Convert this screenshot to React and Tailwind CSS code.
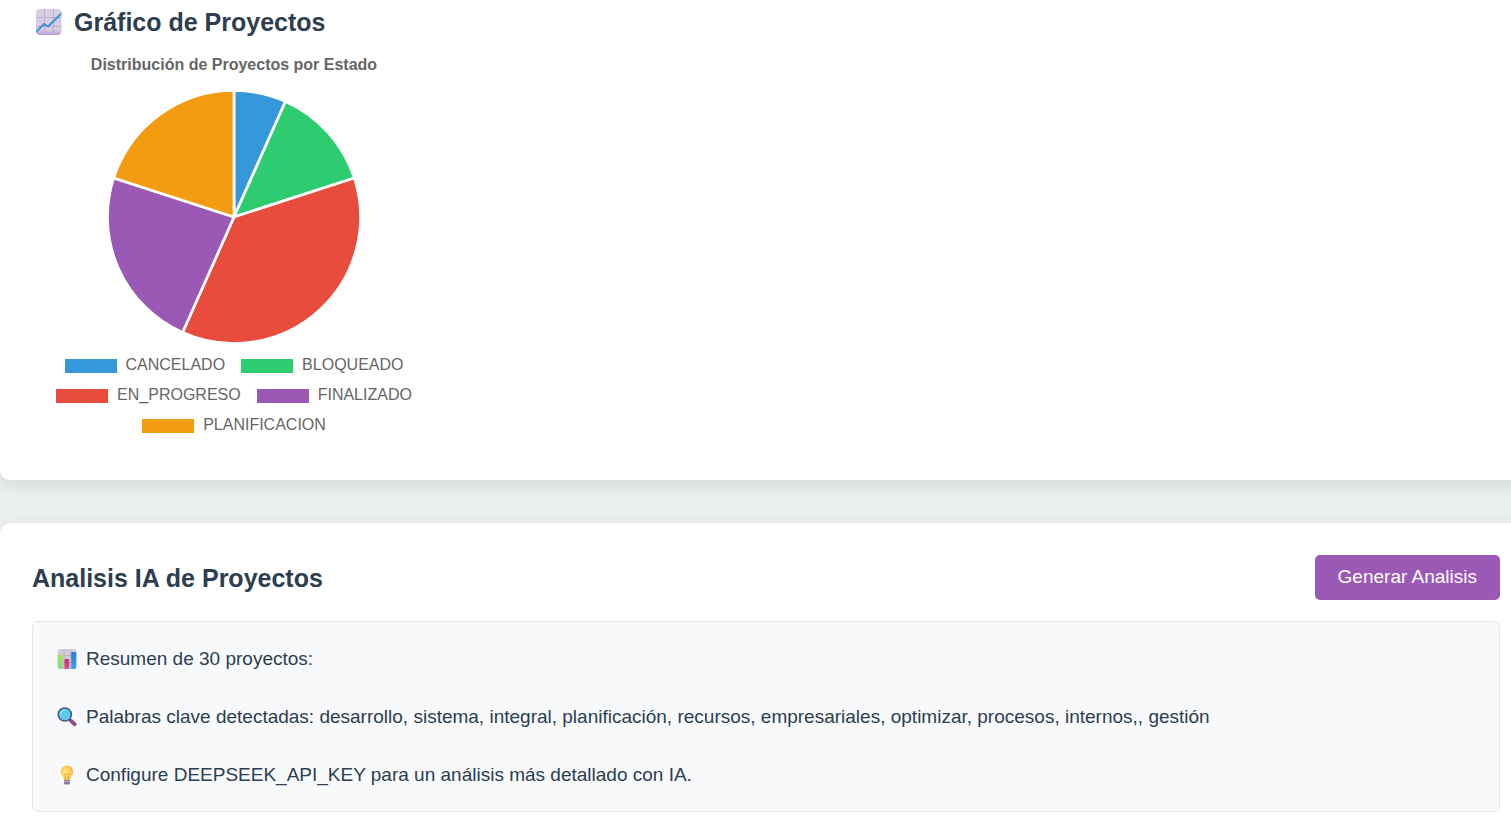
const SLICES = [
  { label: "CANCELADO", value: 2, fill: "fill-[#3498db]", swatch: "bg-[#3498db]" },
  { label: "BLOQUEADO", value: 4, fill: "fill-[#2ecc71]", swatch: "bg-[#2ecc71]" },
  { label: "EN_PROGRESO", value: 11, fill: "fill-[#e74c3c]", swatch: "bg-[#e74c3c]" },
  { label: "FINALIZADO", value: 7, fill: "fill-[#9b59b6]", swatch: "bg-[#9b59b6]" },
  { label: "PLANIFICACION", value: 6, fill: "fill-[#f39c12]", swatch: "bg-[#f39c12]" },
];

const RADIUS = 126.5;
const CENTER = 128;

function slicePaths(slices) {
  const total = slices.reduce((sum, s) => sum + s.value, 0);
  const point = (v) => {
    const a = (v / total) * Math.PI * 2;
    return `${CENTER + RADIUS * Math.sin(a)} ${CENTER - RADIUS * Math.cos(a)}`;
  };
  let start = 0;
  return slices.map((s) => {
    const end = start + s.value;
    const large = s.value / total > 0.5 ? 1 : 0;
    const d = `M${CENTER} ${CENTER}L${point(start)}A${RADIUS} ${RADIUS} 0 ${large} 1 ${point(end)}Z`;
    start = end;
    return { ...s, d };
  });
}

function PieChart() {
  return (
    <svg viewBox="0 0 256 256" className="size-64" role="img" aria-label="Distribución de Proyectos por Estado">
      {slicePaths(SLICES).map((s) => (
        <path key={s.label} d={s.d} className={s.fill} stroke="#fff" strokeWidth="2.7" strokeLinejoin="bevel" />
      ))}
    </svg>
  );
}

function TrendIcon() {
  return (
    <svg viewBox="0 0 26 26" className="size-[26px] shrink-0" aria-hidden="true">
      <defs>
        <linearGradient id="trend-bg" x1="0" y1="0" x2="0" y2="1">
          <stop offset="0" stopColor="#d6d0de" />
          <stop offset="0.8" stopColor="#d8cbe4" />
          <stop offset="1" stopColor="#b99bcf" />
        </linearGradient>
        <clipPath id="trend-clip"><rect width="25.500" height="26" rx="4" /></clipPath>
      </defs>
      <g clipPath="url(#trend-clip)">
        <rect width="26" height="26" fill="url(#trend-bg)" />
        <path d="M8.500 0V26M17.500 0V26M0 8.500H26M0 17.500H26" stroke="#b9adc4" strokeWidth="0.900" />
        <path d="M0 23L8 15L12 17.500L26 4" fill="none" stroke="#3191dc" strokeWidth="1.800" strokeLinejoin="round" />
      </g>
    </svg>
  );
}

function BarsIcon() {
  return (
    <svg viewBox="0 0 20 20" className="size-5 shrink-0" aria-hidden="true">
      <defs>
        <linearGradient id="bar-green" x1="0" y1="0" x2="0" y2="1">
          <stop offset="0" stopColor="#a5ea4f" /><stop offset="1" stopColor="#7bdc7f" />
        </linearGradient>
        <linearGradient id="bar-pink" x1="0" y1="0" x2="0" y2="1">
          <stop offset="0" stopColor="#c52c72" /><stop offset="1" stopColor="#f0448b" />
        </linearGradient>
        <linearGradient id="bar-blue" x1="0" y1="0" x2="0" y2="1">
          <stop offset="0" stopColor="#2a7bd0" /><stop offset="1" stopColor="#38a4f5" />
        </linearGradient>
      </defs>
      <rect x="0.5" width="19" height="20" rx="2.5" fill="#d2cbda" />
      <path d="M7 0V20M13.5 0V20M0.5 6.5H19.5M0.5 13.5H19.5" stroke="#b7abc2" strokeWidth="0.8" />
      <path d="M1 5.5H4.500Q5.500 5.500 5.500 6.500V20H3Q1 20 1 18Z" fill="url(#bar-green)" />
      <rect x="7.500" y="10" width="4.600" height="10" rx="1" fill="url(#bar-pink)" />
      <path d="M14.200 4Q14.200 3 15.200 3H18.200Q19.200 3 19.200 4V18Q19.200 20 17.200 20H14.200Z" fill="url(#bar-blue)" />
    </svg>
  );
}

function MagnifierIcon() {
  return (
    <svg viewBox="0 0 20 20" className="size-5 shrink-0" aria-hidden="true">
      <path d="M12 12L14.500 14.500" stroke="#51456f" strokeWidth="2.500" />
      <path d="M14 13.800L17.600 17.200" stroke="#8c4a86" strokeWidth="3.800" strokeLinecap="round" />
      <circle cx="7.800" cy="7.500" r="6.600" fill="#5cc9e8" stroke="#4b5482" strokeWidth="1.500" />
      <path d="M3.800 7A4.200 4.200 0 0 1 7.800 3.200" fill="none" stroke="#8ae0f3" strokeWidth="1.400" strokeLinecap="round" />
    </svg>
  );
}

function BulbIcon() {
  return (
    <svg viewBox="0 0 20 20" className="size-5 shrink-0" aria-hidden="true">
      <defs>
        <radialGradient id="bulb" cx="0.4" cy="0.5" r="0.65">
          <stop offset="0" stopColor="#ffec83" /><stop offset="0.6" stopColor="#fdd052" /><stop offset="1" stopColor="#f5a23e" />
        </radialGradient>
      </defs>
      <rect x="7" y="14" width="6" height="5.500" rx="1.500" fill="#8f7a9d" />
      <path d="M7 16.500H13" stroke="#bcaec5" strokeWidth="1" />
      <path d="M10 0.500A6.200 6.200 0 0 1 16.200 6.700C16.200 10 13.400 11.500 13.200 14Q13.100 15 12.100 15H7.900Q6.900 15 6.800 14C6.600 11.500 3.800 10 3.800 6.700A6.200 6.200 0 0 1 10 0.500Z" fill="url(#bulb)" />
      <path d="M9 14.500L7.700 8.800Q9 10 10 8.800Q11 10 12.300 8.800L11 14.500" fill="none" stroke="#ef9c35" strokeWidth="0.900" />
    </svg>
  );
}

const RESULTS = [
  { Icon: BarsIcon, text: "Resumen de 30 proyectos:" },
  {
    Icon: MagnifierIcon,
    text: "Palabras clave detectadas: desarrollo, sistema, integral, planificación, recursos, empresariales, optimizar, procesos, internos,, gestión",
  },
  { Icon: BulbIcon, text: "Configure DEEPSEEK_API_KEY para un análisis más detallado con IA." },
];

export default function App() {
  return (
    <div className="flex min-h-screen flex-col gap-[43px] overflow-hidden bg-[#ecf0f1] font-['Liberation_Sans',Arial,sans-serif] text-[#2c3e50]">
      <section className="-mr-[21px] rounded-b-[11px] bg-white px-8 pt-1 pb-10 shadow-[0_5px_20px_rgba(0,0,0,0.1)]">
        <h2 className="flex items-center gap-3 pl-1 text-[25px] leading-9 font-bold">
          <TrendIcon />
          Gráfico de Proyectos
        </h2>
        <div className="mt-[13px] flex w-[404px] max-w-full flex-col items-center text-[#666]">
          <h3 className="text-base leading-6 font-bold">Distribución de Proyectos por Estado</h3>
          <div className="mt-3">
            <PieChart />
          </div>
          <ul className="mt-[5px] flex flex-wrap justify-center gap-x-4 text-base leading-[30px]">
            {SLICES.map((s) => (
              <li key={s.label} className="flex items-center gap-[9px]">
                <span className={`mt-0.5 h-[14px] w-[52px] ${s.swatch}`} />
                {s.label}
              </li>
            ))}
          </ul>
        </div>
      </section>

      <section className="-mr-[21px] flex-1 rounded-t-[11px] bg-white px-8 pt-8 pb-4 shadow-[0_5px_20px_rgba(0,0,0,0.1)]">
        <div className="flex items-center justify-between">
          <h2 className="text-[25px] leading-9 font-bold">Analisis IA de Proyectos</h2>
          <button type="button" className="h-[45px] cursor-pointer rounded-[5px] bg-[#9b59b6] px-[23px] text-[19px] text-white">
            Generar Analisis
          </button>
        </div>
        <div className="mt-[21px] flex flex-col gap-[29px] rounded-md border border-[#e5e8eb] bg-[#f8f9fb] px-6 py-[22px] text-[19px] leading-[29px]">
          {RESULTS.map(({ Icon, text }) => (
            <p key={text} className="flex items-center gap-[9px]">
              <Icon />
              {text}
            </p>
          ))}
        </div>
      </section>
    </div>
  );
}
